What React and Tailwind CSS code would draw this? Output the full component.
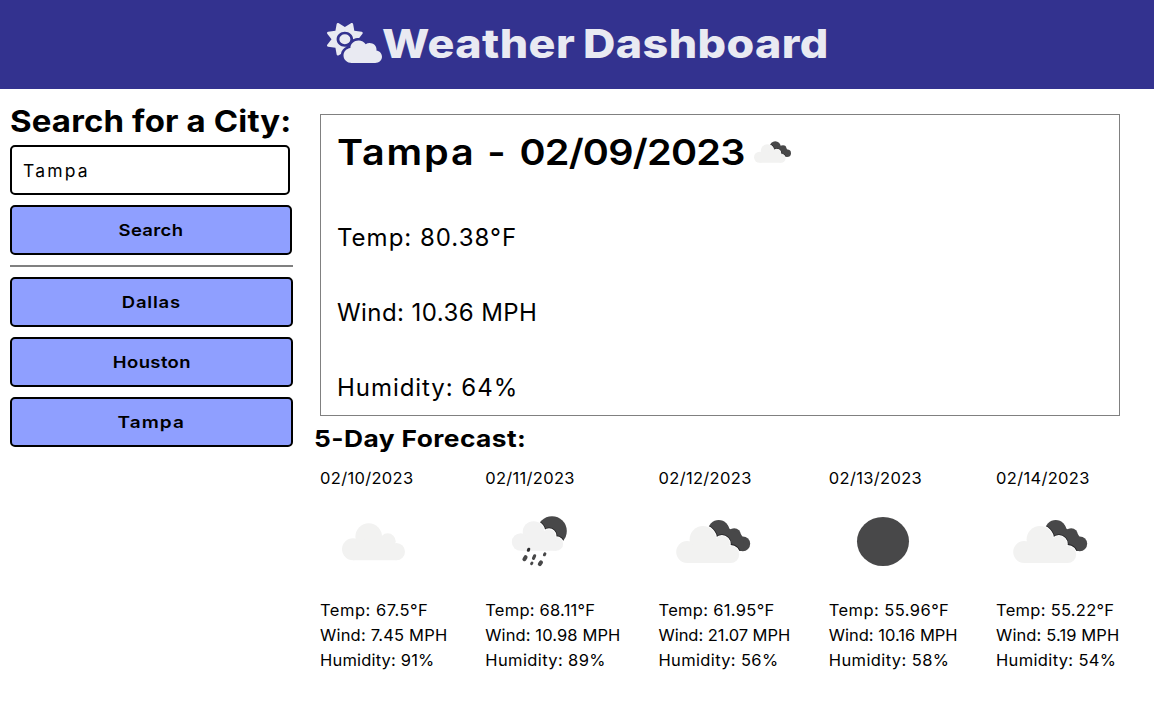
import { useId } from "react";
import { FaCloudSun } from "react-icons/fa6";

function CloudShape(props) {
  return (
    <g {...props}>
      <circle cx="11" cy="26" r="11" />
      <circle cx="26.7" cy="13.3" r="13.3" />
      <circle cx="45.7" cy="18" r="8" />
      <circle cx="54.4" cy="28.4" r="8.6" />
      <path d="M11 37L11 20L38 12L54 24L54.4 37Z" />
    </g>
  );
}

function DarkClouds() {
  return (
    <>
      <circle cx="42.5" cy="4.8" r="10.8" />
      <circle cx="58" cy="9" r="6.8" />
      <circle cx="66.6" cy="17.8" r="7.4" />
      <path d="M40 14L52.8 2.6L64.6 8L66.5 11L68 25L52 25Z" />
    </>
  );
}

function BrokenClouds() {
  const id = useId();
  return (
    <>
      <clipPath id={id}>
        <DarkClouds />
      </clipPath>
      <g fill="#484849">
        <DarkClouds />
      </g>
      <g clipPath={`url(#${id})`}>
        <CloudShape fill="#222224" stroke="#222224" strokeWidth="3.4" />
      </g>
      <CloudShape fill="#ffffff" stroke="#ffffff" strokeWidth="1.8" />
      <CloudShape fill="#f2f2f1" />
    </>
  );
}

function Rain() {
  const id = useId();
  return (
    <>
      <clipPath id={id}>
        <circle cx="67" cy="40" r="14.8" />
      </clipPath>
      <circle cx="67" cy="40" r="14.8" fill="#484849" />
      <g clipPath={`url(#${id})`}>
        <CloudShape transform="translate(26.8 30.2) scale(.815 .8)" fill="#222224" stroke="#222224" strokeWidth="4.2" />
      </g>
      <CloudShape transform="translate(26.8 30.2) scale(.815 .8)" fill="#ffffff" stroke="#ffffff" strokeWidth="2.2" />
      <CloudShape transform="translate(26.8 30.2) scale(.815 .8)" fill="#f2f2f2" />
      <g stroke="#484849" strokeLinecap="round" fill="none">
        <path d="M43.3 59.3L43.8 58.2" strokeWidth="3" stroke="#2c2c2e" />
        <path d="M39.4 68.2L40.6 66.2" strokeWidth="4" />
        <path d="M48.5 67.3L49.6 64.8" strokeWidth="3.2" />
        <path d="M59.4 63.8L59.9 62.8" strokeWidth="3" />
        <path d="M46.5 72.7L47 71.9" strokeWidth="2.8" />
        <path d="M54.8 73.2L56 71.4" strokeWidth="4" />
      </g>
    </>
  );
}

const icons = {
  cloud: <CloudShape transform="translate(22 32.3)" fill="#f2f2f1" />,
  rain: <Rain />,
  broken: (
    <g transform="translate(17.2 35)">
      <BrokenClouds />
    </g>
  ),
  moon: <ellipse cx="54" cy="50.5" rx="26" ry="24.5" fill="#484849" />,
};

const days = [
  { date: "02/10/2023", icon: "cloud", temp: "67.5", wind: "7.45", hum: "91", width: "w-[127px]", ls: ["tracking-[0.33px]", "tracking-[0.5px]", "tracking-[0.2px]", "tracking-[0.18px]"] },
  { date: "02/11/2023", icon: "rain", temp: "68.11", wind: "10.98", hum: "89", width: "w-[135px]", ls: ["tracking-[0.3px]", "tracking-[0.23px]", "tracking-[0.1px]", "tracking-[0.39px]"] },
  { date: "02/12/2023", icon: "broken", temp: "61.95", wind: "21.07", hum: "56", width: "w-[132px]", ls: ["tracking-[0.33px]", "tracking-[0.31px]", "tracking-[-0.05px]", "tracking-[0.35px]"] },
  { date: "02/13/2023", icon: "moon", temp: "55.96", wind: "10.16", hum: "58", width: "w-[129px]", ls: ["tracking-[0.33px]", "tracking-[0.43px]", "tracking-[0px]", "tracking-[0.4px]"] },
  { date: "02/14/2023", icon: "broken", temp: "55.22", wind: "5.19", hum: "54", width: "w-[124px]", ls: ["tracking-[0.33px]", "tracking-[0.28px]", "tracking-[0.12px]", "tracking-[0.35px]"] },
];

function Day({ day }) {
  return (
    <div className={`${day.width} whitespace-nowrap text-[16.5px] leading-[25px]`}>
      <p className={`h-[26px] leading-[26px] ${day.ls[0]}`}>{day.date}</p>
      <svg className="block h-[107px] w-[110px]" viewBox="0 0 110 107">
        {icons[day.icon]}
      </svg>
      <p className={day.ls[1]}>Temp: {day.temp}°F</p>
      <p className={day.ls[2]}>Wind: {day.wind} MPH</p>
      <p className={day.ls[3]}>Humidity: {day.hum}%</p>
    </div>
  );
}

const button = "block h-[50px] rounded-[5px] border-2 border-black bg-[#8f9fff] text-[16.5px] font-semibold";

export default function App() {
  return (
    <div className="min-h-[714px] bg-white font-['Inter',sans-serif] text-black">
      <header className="flex h-[89px] items-center bg-[#33328f] pb-[2px] pl-[327px] text-[#e9eaf2]">
        <FaCloudSun preserveAspectRatio="none" className="mb-px h-[40px] w-[55px] shrink-0" />
        <h1 className="origin-left scale-x-[1.12] whitespace-nowrap text-[40px] font-extrabold leading-[60px] tracking-[0.35px] [word-spacing:-2px]">Weather Dashboard</h1>
      </header>
      <div className="flex">
        <aside className="flex w-[293px] shrink-0 flex-col pl-[10px] pt-[6px]">
          <h2 className="h-[50px] origin-left scale-x-[1.1] whitespace-nowrap text-[30px] font-bold leading-[52px] tracking-[0.12px]">Search for a City:</h2>
          <input
            className="h-[50px] w-[280px] rounded-[5px] border-2 border-black bg-white pl-[11px] text-[17.5px] tracking-[2.2px]"
            defaultValue="Tampa"
          />
          <button className={`${button} mt-[10px] w-[282px]`}>
            <span className="inline-block scale-x-[1.12] tracking-[0.3px]">Search</span>
          </button>
          <hr className="my-[10px] h-[2px] border-0 bg-[#808080]" />
          <div className="flex flex-col gap-[10px]">
            <button className={button}>
              <span className="inline-block scale-x-[1.12] tracking-[0.7px]">Dallas</span>
            </button>
            <button className={button}>
              <span className="inline-block scale-x-[1.12] tracking-[0.35px]">Houston</span>
            </button>
            <button className={button}>
              <span className="inline-block scale-x-[1.15] tracking-[0.9px]">Tampa</span>
            </button>
          </div>
        </aside>
        <main className="ml-[27px] w-[800px] pt-[25px]">
          <section className="h-[302px] border border-[#808080] pl-[16px]">
            <div className="flex h-[75px] items-center pb-px">
              <h2 className="w-[417px] shrink-0 whitespace-nowrap text-[36px] font-semibold">
                <span className="inline-block origin-left scale-x-[1.1] tracking-[-0.7px]">
                  <span className="tracking-[1.65px]">Tampa - </span>02/09/2023
                </span>
              </h2>
              <svg className="h-[24px] w-[38px]" viewBox="0 -8.5 76 48">
                <BrokenClouds />
              </svg>
            </div>
            <div className="mt-[23px] flex flex-col gap-[25px] text-[24px] leading-[50px]">
              <p className="tracking-[1px]">Temp: 80.38°F</p>
              <p className="tracking-[0.43px]">Wind: 10.36 MPH</p>
              <p className="tracking-[0.95px]">Humidity: 64%</p>
            </div>
          </section>
          <h3 className="-ml-[6px] h-[45px] text-[23.5px] font-bold leading-[45px]">
            <span className="inline-block origin-left scale-x-[1.12] tracking-[0.38px]">5-Day Forecast:</span>
          </h3>
          <div className="flex justify-between pt-1">
            {days.map((day) => (
              <Day key={day.date} day={day} />
            ))}
          </div>
        </main>
      </div>
    </div>
  );
}
